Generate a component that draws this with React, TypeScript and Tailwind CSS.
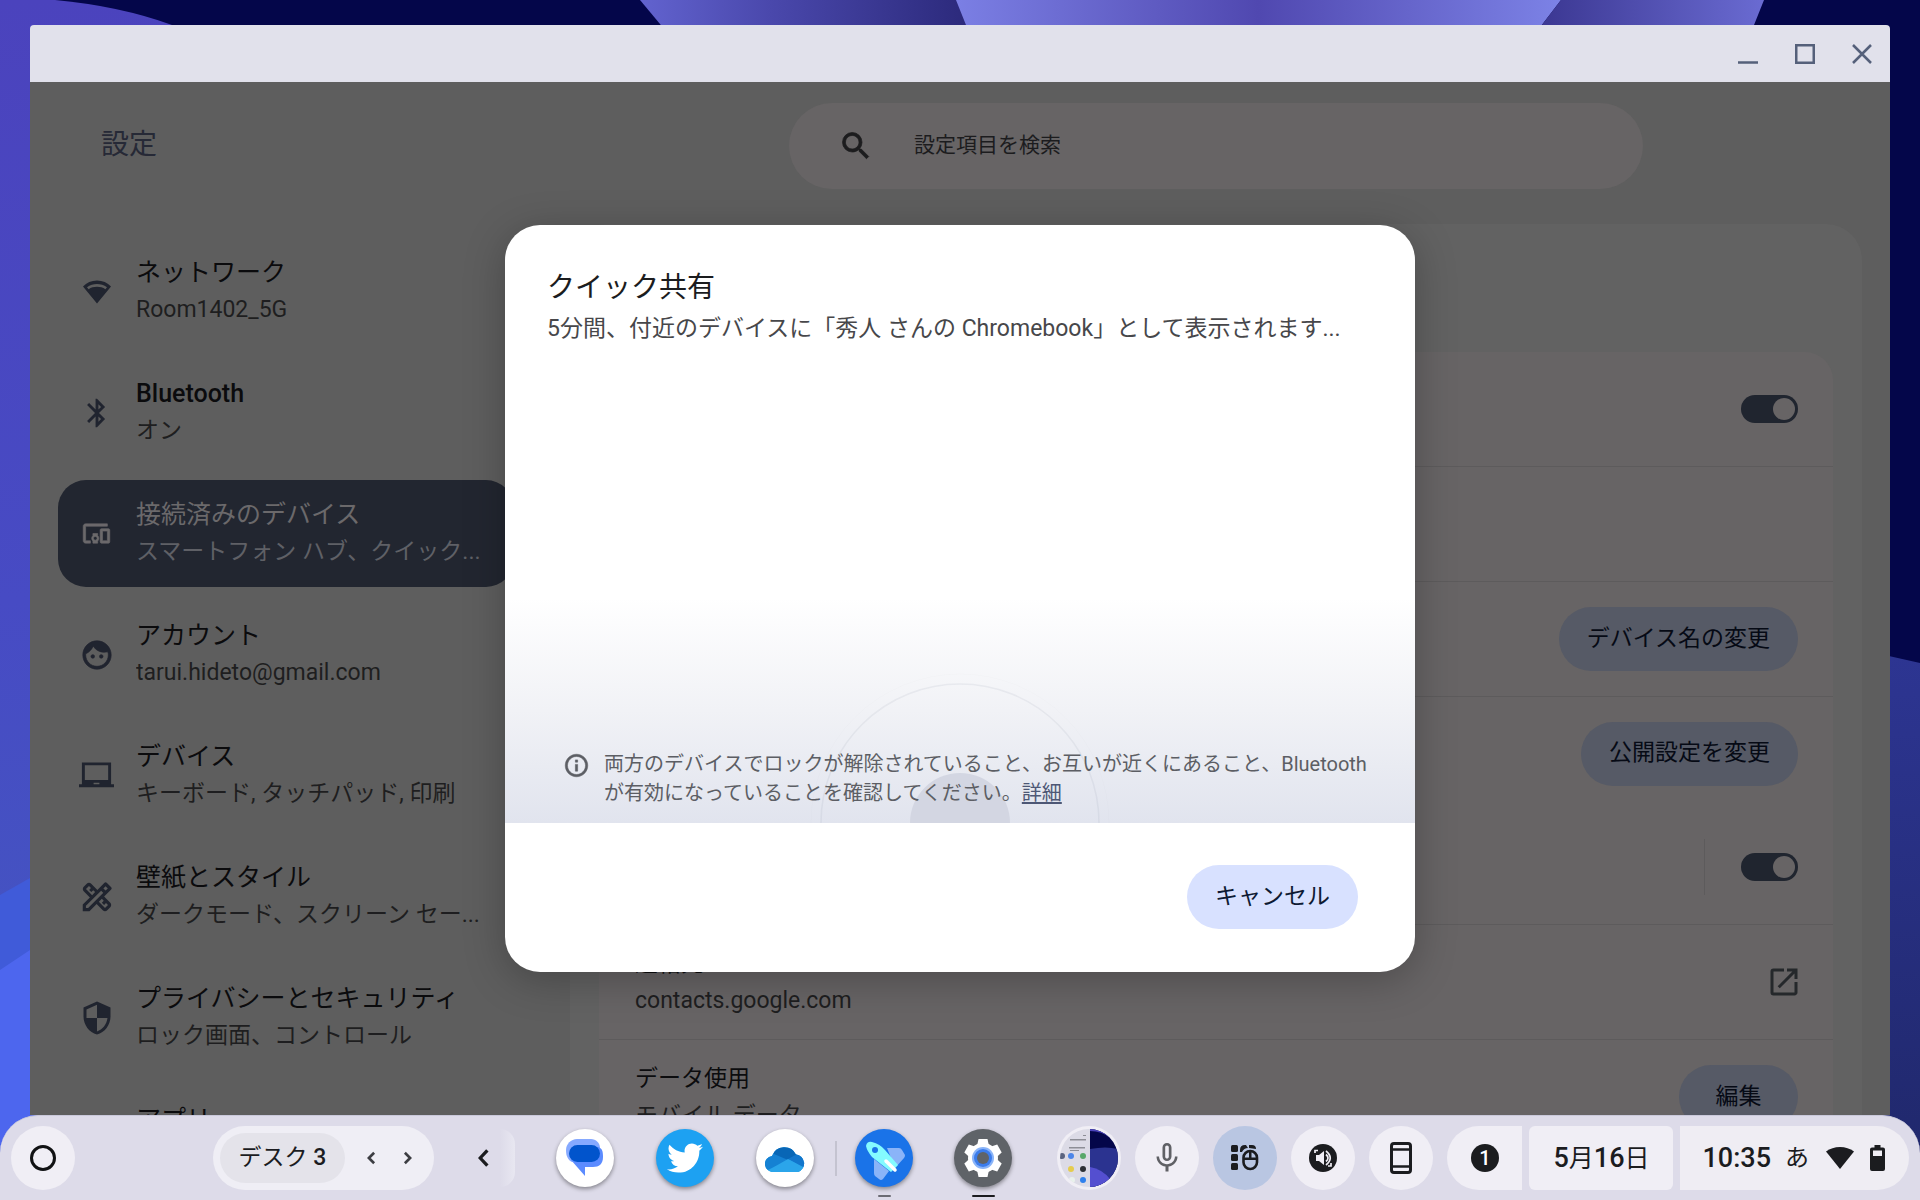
import React from "react";
import {
	MdBluetooth,
	MdDevicesOther,
	MdFace,
	MdInfoOutline,
	MdMicNone,
	MdOpenInNew,
	MdOutlineDesignServices,
	MdOutlineLaptopChromebook,
	MdSearch,
	MdSecurity,
} from "react-icons/md";
import { FaTwitter } from "react-icons/fa";

interface NavItem {
	title: string;
	sub: string;
	icon: React.ReactNode;
	medium?: boolean;
	selected?: boolean;
}

// thickens the glyph only, not the empty bounding path that react-icons adds
const bold = "[&>path:last-child]:[stroke-width:0.5]";

const WifiIcon = () => (
	<svg viewBox="0 0 28 24" className="h-6 w-7" fill="currentColor">
		<path
			fillRule="evenodd"
			d="M14 23.5L0 6.5C3.5 2.5 8.5.5 14 .5s10.5 2 14 6L14 23.5zM4 7.2l1.6 2C8 7.6 11 6.8 14 6.8s6 .8 8.4 2.4l1.6-2C21 5 17.500 4 14 4S7 5 4 7.200z"
		/>
	</svg>
);

const navItems: NavItem[] = [
	{ title: "ネットワーク", sub: "Room1402_5G", icon: <WifiIcon /> },
	{ title: "Bluetooth", sub: "オン", icon: <MdBluetooth size={34} />, medium: true },
	{
		title: "接続済みのデバイス",
		sub: "スマートフォン ハブ、クイック...",
		icon: <MdDevicesOther size={29} className={bold} />,
		selected: true,
	},
	{ title: "アカウント", sub: "tarui.hideto@gmail.com", icon: <MdFace size={34} className={bold} /> },
	{
		title: "デバイス",
		sub: "キーボード, タッチパッド, 印刷",
		icon: <MdOutlineLaptopChromebook size={35} />,
	},
	{
		title: "壁紙とスタイル",
		sub: "ダークモード、スクリーン セー...",
		icon: <MdOutlineDesignServices size={38} />,
	},
	{
		title: "プライバシーとセキュリティ",
		sub: "ロック画面、コントロール",
		icon: <MdSecurity size={36} />,
	},
	{ title: "アプリ", sub: "", icon: null },
];

const Wallpaper = () => (
	<svg
		className="absolute inset-0 h-full w-full"
		viewBox="0 0 1920 1200"
		preserveAspectRatio="none"
		aria-hidden="true"
	>
		<defs>
			<linearGradient id="left" x1="0" y1="0" x2="0" y2="1">
				<stop offset="0" stopColor="#4b43bd" />
				<stop offset="0.5" stopColor="#474bc4" />
				<stop offset="1" stopColor="#4259c0" />
			</linearGradient>
			<linearGradient id="petalA" x1="640" x2="965" y1="0" y2="0" gradientUnits="userSpaceOnUse">
				<stop offset="0" stopColor="#6263cf" />
				<stop offset="0.4" stopColor="#4a48ac" />
				<stop offset="1" stopColor="#2c2a7c" />
			</linearGradient>
			<linearGradient id="petalB" x1="957" x2="1560" y1="0" y2="0" gradientUnits="userSpaceOnUse">
				<stop offset="0" stopColor="#7b7fe4" />
				<stop offset="0.5" stopColor="#5048b0" />
				<stop offset="1" stopColor="#7c82e6" />
			</linearGradient>
			<linearGradient id="petalC" x1="1545" x2="1764" y1="0" y2="0" gradientUnits="userSpaceOnUse">
				<stop offset="0" stopColor="#3c3893" />
				<stop offset="1" stopColor="#6a6bd2" />
			</linearGradient>
			<linearGradient id="right" x1="0" y1="0" x2="0" y2="1">
				<stop offset="0" stopColor="#2d3592" />
				<stop offset="1" stopColor="#1f2769" />
			</linearGradient>
		</defs>
		<rect width="1920" height="1200" fill="#04064a" />
		<path d="M0 0h55Q120 6 172 25L300 100V1200H0z" fill="url(#left)" />
		<path d="M0 895L30 878L60 860V1200H0z" fill="#405bd9" />
		<path d="M0 970L30 950L60 930V1200H0z" fill="#4d66ee" />
		<path d="M640 0L665 30H970L957 0z" fill="url(#petalA)" />
		<path d="M956 0L968 30H1538L1561 0z" fill="url(#petalB)" />
		<path d="M1561 0L1538 30H1752L1764 0z" fill="url(#petalC)" />
		<path d="M1880 654L1920 663V1200H1880z" fill="url(#right)" />
	</svg>
);

const WindowBar = () => (
	<div className="flex h-[57px] shrink-0 items-center justify-end bg-[#e1e1eb] text-[#55607a]">
		<button aria-label="最小化" className="flex h-full w-[57px] items-center justify-center">
			<svg viewBox="0 0 20 20" className="size-5" stroke="currentColor" strokeWidth="2.5">
				<path d="M0 18.500h20" />
			</svg>
		</button>
		<button aria-label="最大化" className="flex h-full w-[57px] items-center justify-center">
			<svg viewBox="0 0 20 20" className="size-5" stroke="currentColor" strokeWidth="2.5" fill="none">
				<rect x="1.250" y="1.250" width="17.500" height="17.500" />
			</svg>
		</button>
		<button aria-label="閉じる" className="flex h-full w-[57px] items-center justify-center">
			<svg viewBox="0 0 20 20" className="size-5" stroke="currentColor" strokeWidth="2.5">
				<path d="M1 1l18 18M19 1L1 19" />
			</svg>
		</button>
	</div>
);

const Toggle = ({ label }: { label: string }) => (
	<input
		type="checkbox"
		role="switch"
		aria-label={label}
		defaultChecked
		className="h-7 w-[57px] appearance-none rounded-full bg-[#20252f] p-[3px] before:block before:size-[22px] before:rounded-full before:bg-[#676465] checked:before:ml-auto"
	/>
);

const PillButton = ({ children }: { children: React.ReactNode }) => (
	<button className="h-16 min-w-[119px] rounded-full bg-[#565a66] px-7 text-[23px] text-[#060a15]">
		{children}
	</button>
);

const Row = ({
	title,
	sub,
	border = true,
	children,
}: {
	title?: string;
	sub?: string;
	border?: boolean;
	children?: React.ReactNode;
}) => (
	<div
		className={`flex shrink-0 items-center justify-between pr-[35px] pl-9 ${
			border ? "h-[115px] border-b border-[#5d5b5c]" : "h-[113px]"
		}`}
	>
		<div className="text-[23px] leading-[37px]">
			<div className="text-[#0c0c0e]">{title}</div>
			<div className="text-[#1e1e20]">{sub}</div>
		</div>
		{children}
	</div>
);

const Sidebar = () => (
	<nav className="flex w-[540px] shrink-0 flex-col gap-[14px] pt-[14px] pr-14 pl-7">
		{navItems.map((item) => (
			<a
				key={item.title}
				href="#"
				className={`flex h-[107px] shrink-0 items-center rounded-[28px] ${
					item.selected ? "bg-[#222630] text-[#6b696b]" : "text-[#20242f]"
				}`}
			>
				<span className="flex w-[78px] shrink-0 justify-center pr-px">{item.icon}</span>
				<span className="min-w-0 flex-1 pb-px leading-[37px]">
					<span
						className={`block truncate text-[25px] ${item.medium ? "font-medium" : ""} ${
							item.selected ? "" : "text-[#0b0b0d]"
						}`}
					>
						{item.title}
					</span>
					<span
						className={`block h-[37px] truncate text-[23px] ${
							item.selected ? "text-[#5f6066]" : "text-[#1e1e20]"
						}`}
					>
						{item.sub}
					</span>
				</span>
			</a>
		))}
	</nav>
);

const ShareDialog = () => (
	<div
		role="dialog"
		aria-labelledby="dialog-title"
		className="absolute inset-0 m-auto flex h-[747px] w-[910px] flex-col overflow-hidden rounded-[35px] bg-white shadow-[0_8px_40px_rgba(0,0,0,0.25)]"
	>
		<div className="px-[42px] pt-[42px]">
			<h2 id="dialog-title" className="text-[28px] leading-[42px] text-[#1b1c1e]">
				クイック共有
			</h2>
			<p className="truncate text-[23px] leading-10 text-[#47474a]">
				5分間、付近のデバイスに「秀人 さんの Chromebook」として表示されます...
			</p>
		</div>
		<div className="relative mt-auto flex h-[225px] items-end overflow-hidden bg-linear-to-b from-white via-[#f1f2f6] to-[#e1e4ee]">
			<svg viewBox="0 0 300 150" className="absolute bottom-0 left-1/2 w-[300px] -translate-x-1/2" fill="none">
				<circle cx="150" cy="150" r="149" stroke="#000" strokeOpacity="0.01" />
				<circle cx="150" cy="150" r="139" stroke="#55607a" strokeOpacity="0.08" strokeWidth="1.5" />
				<circle cx="150" cy="150" r="50" fill="#d3d6e2" />
			</svg>
			<div className="relative flex items-start gap-[14px] pb-[15px] pl-[58px] text-[#5c5e64]">
				<MdInfoOutline size={27} className={`mt-[2px] shrink-0 ${bold}`} />
				<p className="text-[20px] leading-[29px]">
					両方のデバイスでロックが解除されていること、お互いが近くにあること、Bluetooth
					<br />
					が有効になっていることを確認してください。
					<a href="#" className="text-[#4d5775] underline underline-offset-2">
						詳細
					</a>
				</p>
			</div>
		</div>
		<div className="flex h-[149px] shrink-0 items-start justify-end pt-[42px] pr-[57px]">
			<button className="h-16 rounded-full bg-[#d8e1ff] px-7 text-[23px] text-[#0e1a33]">キャンセル</button>
		</div>
	</div>
);

const Settings = () => (
	<div className="relative flex min-h-0 flex-1 flex-col overflow-hidden bg-[#5e5e5e]">
		<header className="flex h-[142px] shrink-0 items-start pr-7">
			<h1 className="w-[540px] shrink-0 pt-[42px] pl-[71px] text-[28px] leading-[42px] text-[#262936]">設定</h1>
			<div className="flex flex-1 justify-center pt-[21px]">
				<label className="flex h-[86px] w-full max-w-[854px] items-center rounded-full bg-[#676465] pl-[49px] text-[#1c1c1e]">
					<MdSearch size={36} className={bold} />
					<input
						type="text"
						aria-label="設定項目を検索"
						placeholder="設定項目を検索"
						className="ml-10 flex-1 bg-transparent text-[21px] outline-none placeholder:text-[#1c1c1e]"
					/>
				</label>
			</div>
		</header>
		<div className="flex min-h-0 flex-1">
			<Sidebar />
			<main className="mr-7 flex-1 overflow-hidden rounded-t-[36px] bg-[#626262] px-[29px] pt-32">
				<div className="rounded-t-[28px] bg-[#676465]">
					<Row>
						<Toggle label="クイック共有" />
					</Row>
					<Row />
					<Row>
						<PillButton>デバイス名の変更</PillButton>
					</Row>
					<Row border={false}>
						<PillButton>公開設定を変更</PillButton>
					</Row>
					<Row>
						<div className="flex h-14 items-center border-l border-[#5d5b5c] pl-9">
							<Toggle label="連絡先に公開" />
						</div>
					</Row>
					<Row title="連絡先" sub="contacts.google.com">
						<button aria-label="連絡先を開く" className="-mr-1 text-[#25282b]">
							<MdOpenInNew size={36} />
						</button>
					</Row>
					<Row title="データ使用" sub="モバイル データ">
						<PillButton>編集</PillButton>
					</Row>
				</div>
			</main>
		</div>
		<ShareDialog />
	</div>
);

const AppIcon = ({
	label,
	color,
	bar,
	children,
}: {
	label: string;
	color: string;
	bar?: string;
	children: React.ReactNode;
}) => (
	<button
		aria-label={label}
		className={`relative flex size-[58px] items-center justify-center rounded-full shadow-[0_2px_4px_rgba(0,0,0,0.4)] ${color}`}
	>
		{children}
		{bar && <span className={`absolute -bottom-[10px] h-[2px] rounded-full ${bar}`} />}
	</button>
);

const MessagesLogo = () => (
	<svg viewBox="0 0 38 38" className="size-[38px]">
		<path d="M11 0H25C30 0 34 4 34 9L20 20L6 23C2 21 0 17 0 11C0 5 5 0 11 0z" fill="#86a9ff" />
		<path d="M32 8C36 9 37 12 37 17V18C37 25 33 28 27 28H19V37L5 21L20 14z" fill="#5b8bff" />
		<rect x="3" y="6" width="31" height="17" rx="8.500" fill="#0154cc" />
	</svg>
);

const CloudLogo = () => (
	<svg viewBox="0 0 40 27" className="w-10">
		<defs>
			<clipPath id="cloud">
				<path d="M9 27a8 8 0 0 1-2-16A13 13 0 0 1 31 9.500A9 9 0 0 1 33 27z" />
			</clipPath>
		</defs>
		<g clipPath="url(#cloud)">
			<rect width="40" height="27" fill="#1f9ae3" />
			<path d="M0 8L9 8L25 15L0 26z" fill="#1581d3" />
			<path d="M8 0h26v10L23 15L9 9z" fill="#0866b6" />
			<path d="M23 14L34 8L40 12V24z" fill="#1276cc" />
			<path d="M2 26L23 14L40 23V27H2z" fill="#2ba5ea" />
		</g>
	</svg>
);

const RocketLogo = () => (
	<svg viewBox="0 0 58 58" className="size-[58px]">
		<path d="M32 19H44Q46 19 47 21L50 26Q50 28 49 29L40 39z" fill="#8ab4f8" />
		<path d="M19 30L34 42L28 50Q26 52 24 50L20 47Q19 46 19 44z" fill="#8ab4f8" />
		<path d="M11 17Q12 12 17 13Q25 15 30 21L43 36L36 43L17 28Q12 22 11 17z" fill="#84fbff" />
		<circle cx="20" cy="21" r="3" fill="#1a73e8" />
		<path d="M31 32l9 9" stroke="#fff" strokeWidth="3.5" strokeLinecap="round" />
	</svg>
);

const GearLogo = () => (
	<svg viewBox="0 0 58 58" className="size-[58px]">
		<g fill="#fff">
			<circle cx="29" cy="29" r="15" />
			{[0, 60, 120].map((deg) => (
				<path key={deg} d="M24.500 10h9l1.500 7v24l-1.500 7h-9l-1.500-7V17z" transform={`rotate(${deg} 29 29)`} />
			))}
		</g>
		<circle cx="29" cy="29" r="11" fill="#8ab4f8" />
		<circle cx="29" cy="29" r="9" fill="#3b7cec" />
		<circle cx="29" cy="29" r="6" fill="#5f6368" />
	</svg>
);

const ScreenThumb = () => (
	<svg viewBox="0 0 58 58" className="size-[58px] rounded-full">
		<rect width="58" height="58" fill="#dcdbe6" />
		<g fill="#8d8e96">
			<rect x="10" y="10" width="16" height="1.500" />
			<rect x="9" y="18" width="16" height="1.500" />
			<rect x="10" y="21" width="9" height="1" />
			<rect x="23" y="6" width="3" height="1" />
		</g>
		<circle cx="11" cy="27" r="3" fill="#4d86e8" />
		<circle cx="23" cy="27" r="3" fill="#58a86a" />
		<circle cx="2" cy="27" r="3" fill="#5b6480" />
		<circle cx="11" cy="40" r="3" fill="#e5cc4d" />
		<circle cx="23" cy="40" r="3" fill="#2d3035" />
		<circle cx="12" cy="51" r="3" fill="#e9f1ec" />
		<circle cx="23" cy="51" r="3" fill="#2f80ed" />
		<rect x="30" width="28" height="58" fill="#04064a" />
		<path d="M30 20q16-3 28 0v38H30z" fill="#2b3390" />
		<path d="M30 2q12 0 20 7l-8-9H30z" fill="#4b43bd" />
		<path d="M30 38q12 2 20 12l-6 8H30z" fill="#544fd0" />
	</svg>
);

const InputAssistIcon = () => (
	<svg viewBox="0 0 28 28" className="size-7" fill="#1b1c1f">
		<rect y="1" width="7" height="7" rx="1.500" />
		<rect y="10" width="7" height="7" rx="1.500" />
		<rect y="19" width="7" height="7" rx="1.500" />
		<path d="M9 6q0-5 5-5h1l2 3q-4 0-6 4H9zM18 1h3q4 0 4 4l-7-1z" />
		<rect x="12.500" y="7" width="13.500" height="18" rx="6.700" fill="none" stroke="#1b1c1f" strokeWidth="2.600" />
		<path d="M12 13.500h15v2.500H12zM18 7h2.500v8H18z" />
	</svg>
);

const SoundIcon = () => (
	<svg viewBox="0 0 28 28" className="size-7">
		<circle cx="14" cy="14" r="14" fill="#1b1c1f" />
		<path d="M7 11h3l5-4v14l-5-4H7z" fill="#f0eef5" />
		<g stroke="#f0eef5" strokeWidth="1.700" fill="none">
			<path d="M17 10.500q4 3.500 0 7M17 7q8.500 7 0 14M6 9V6.500h3M22 19v3h-3" />
		</g>
	</svg>
);

const PhoneIcon = () => (
	<svg viewBox="0 0 22 32" className="h-8 w-[22px]" fill="none" stroke="#1b1c1f">
		<rect x="1.500" y="1.500" width="19" height="29" rx="2.500" strokeWidth="3" />
		<path d="M3 7.500h16M3 24.500h16" strokeWidth="2.500" />
	</svg>
);

const TrayButton = ({
	label,
	color = "bg-[#f0eef5]",
	children,
}: {
	label: string;
	color?: string;
	children: React.ReactNode;
}) => (
	<button aria-label={label} className={`flex size-16 items-center justify-center rounded-full ${color}`}>
		{children}
	</button>
);

const Chevron = ({ d, size, width }: { d: string; size: string; width: number }) => (
	<svg viewBox="0 0 10 16" className={size} fill="none" stroke="currentColor" strokeWidth={width}>
		<path d={d} />
	</svg>
);

const Shelf = () => (
	<footer className="relative flex h-[85px] shrink-0 items-center rounded-t-[38px] border-t border-[#c9c8da] bg-[#dddbe9] px-[11px] text-[#1b1c1f]">
		<TrayButton label="ランチャー">
			<span className="size-[26px] rounded-full border-[3px] border-[#111214]" />
		</TrayButton>
		<div className="ml-[138px] flex h-16 items-center rounded-full bg-[#efeef5] pl-[7px]">
			<button className="h-[50px] w-[125px] rounded-full bg-[#e4e3ea] text-[23px]">
				デスク <span className="font-medium">3</span>
			</button>
			<button aria-label="前のデスク" className="flex h-full w-[37px] items-center justify-end pr-[6px] text-[#3c3d42]">
				<Chevron d="M8 2L2 8l6 6" size="h-[14px] w-[9px]" width={3} />
			</button>
			<button aria-label="次のデスク" className="flex h-full w-[52px] items-center pl-[21px] text-[#3c3d42]">
				<Chevron d="M2 2l6 6-6 6" size="h-[14px] w-[9px]" width={3} />
			</button>
		</div>
		<button aria-label="アプリを戻る" className="ml-11 flex w-[37px] items-center">
			<Chevron d="M8.500 1L2 8l6.500 7" size="h-[18px] w-[11px]" width={3} />
		</button>
		<span className="-ml-[15px] h-[58px] w-[15px] rounded-r-full bg-linear-to-r from-[#dddbe9] to-[#e8e7f1]" />
		<div className="ml-[41px] flex items-center gap-[42px]">
			<AppIcon label="メッセージ" color="bg-white">
				<MessagesLogo />
			</AppIcon>
			<AppIcon label="Twitter" color="bg-[#1da1f2]">
				<FaTwitter size={36} className="text-white" />
			</AppIcon>
			<AppIcon label="OneDrive" color="bg-white">
				<CloudLogo />
			</AppIcon>
		</div>
		<span className="ml-[21px] h-[35px] w-[2px] bg-[#c4c3d0]" />
		<div className="ml-[18px] flex items-center gap-[41px]">
			<AppIcon label="使い方・ヒント" color="bg-[#1a73e8]" bar="w-[13px] bg-[#6b6b73]">
				<RocketLogo />
			</AppIcon>
			<AppIcon label="設定" color="bg-[#5f6368]" bar="w-[23px] bg-[#1b1c1f]">
				<GearLogo />
			</AppIcon>
		</div>
		<div className="ml-auto flex items-center gap-[14px]">
			<TrayButton label="最近の画面キャプチャ">
				<ScreenThumb />
			</TrayButton>
			<TrayButton label="音声入力">
				<MdMicNone size={36} className="text-[#5f6065]" />
			</TrayButton>
			<TrayButton label="ゲーム操作" color="bg-[#b9c6e2]">
				<InputAssistIcon />
			</TrayButton>
			<TrayButton label="音声出力">
				<SoundIcon />
			</TrayButton>
			<TrayButton label="スマートフォン ハブ">
				<PhoneIcon />
			</TrayButton>
			<div className="flex items-center gap-[7px] text-[27px] font-medium">
				<button
					aria-label="通知"
					className="flex h-16 w-[75px] items-center justify-center rounded-l-full rounded-r-md bg-[#f0eef5]"
				>
					<span className="flex size-7 items-center justify-center rounded-full bg-[#1b1c1f] text-[20px] text-white">
						1
					</span>
				</button>
				<button className="h-16 w-36 rounded-md bg-[#f0eef5]">
					5<span className="text-[25px] font-normal">月</span>16
					<span className="text-[25px] font-normal">日</span>
				</button>
				<button className="flex h-16 items-center rounded-l-md rounded-r-full bg-[#efedf3] pr-6 pl-[22px]">
					10:35
					<span className="ml-[14px] text-[24px] font-normal">あ</span>
					<svg viewBox="0 0 28 22" className="ml-[17px] h-[22px] w-7" fill="currentColor">
						<path d="M14 22L0 4.500Q6 0 14 0t14 4.500z" />
					</svg>
					<svg viewBox="0 0 15 26" className="ml-4 h-[26px] w-[15px]" fill="currentColor">
						<path
							fillRule="evenodd"
							d="M4.500 0h6v2.500H13a2 2 0 0 1 2 2V24a2 2 0 0 1-2 2H2a2 2 0 0 1-2-2V4.500a2 2 0 0 1 2-2h2.500zM3 5.500V11h9V5.500z"
						/>
					</svg>
				</button>
			</div>
		</div>
	</footer>
);

const App: React.FC = () => {
	return (
		<div className="relative flex h-screen flex-col overflow-hidden font-['Roboto','Noto_Sans_CJK_JP',sans-serif]">
			<Wallpaper />
			<div className="relative mx-[30px] mt-[25px] flex min-h-0 flex-1 flex-col overflow-hidden rounded-t-[4px]">
				<WindowBar />
				<Settings />
			</div>
			<Shelf />
		</div>
	);
};

export default App;
